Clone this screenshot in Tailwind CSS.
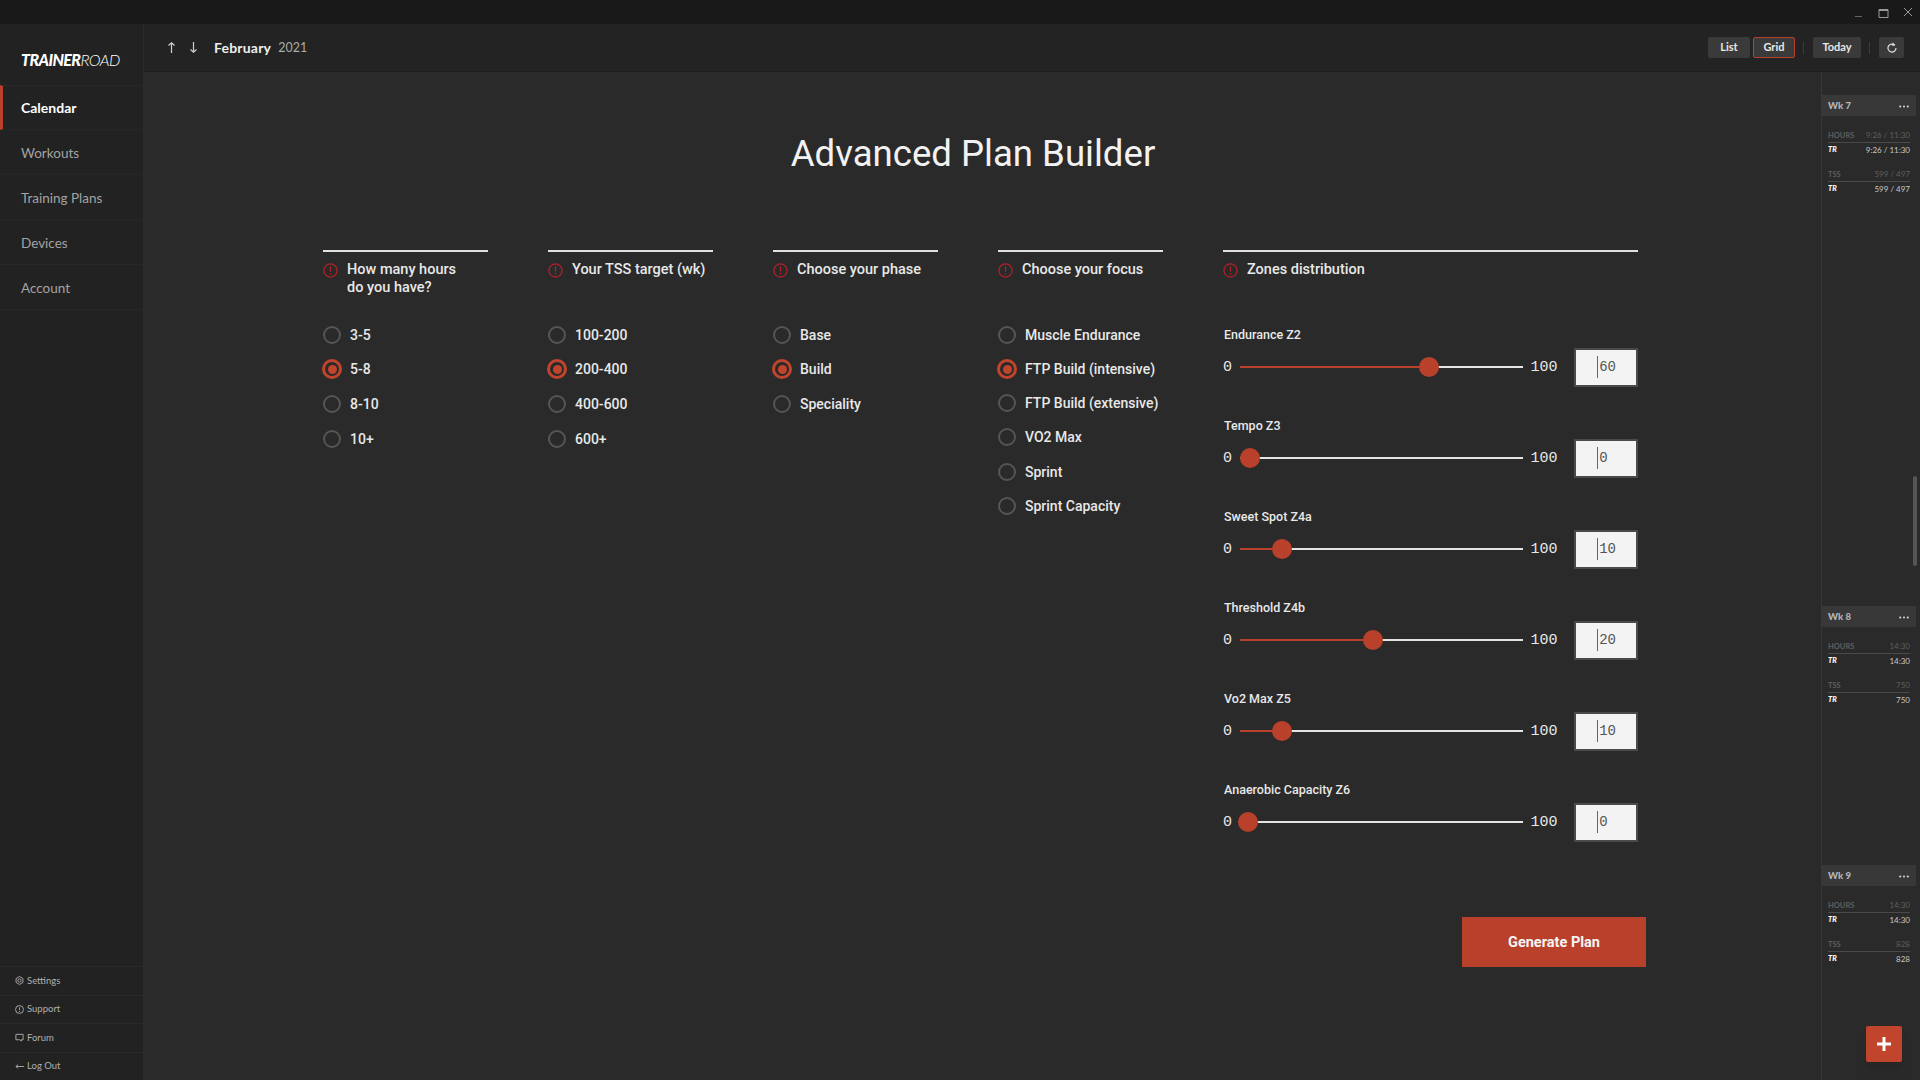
<!DOCTYPE html>
<html>
<head>
<meta charset="utf-8">
<script src="https://cdn.jsdelivr.net/npm/@tailwindcss/browser@4"></script>
</head>
<body class="m-0 h-[1080px] w-[1920px] overflow-hidden bg-[#2a2a2a] font-['Lato',sans-serif] text-[#e8e8e8]">
<!-- title bar -->
<div class="flex h-[24px] items-center justify-end bg-[#191919] pr-[7px]">
  <svg class="mr-[15px] mt-[2px]" width="9" height="10" viewBox="0 0 9 10"><path d="M1 8.5H8" stroke="#666" stroke-width="1"/></svg>
  <svg class="mr-[14px] mt-[1px]" width="11" height="10" viewBox="0 0 11 10"><path d="M1 1.5H10V9.5H1Z" fill="none" stroke="#999" stroke-width="1"/><path d="M1 2H10" stroke="#999" stroke-width="2"/></svg>
  <svg width="10" height="10" viewBox="0 0 10 10"><path d="M1 1L9 9M9 1L1 9" stroke="#999" stroke-width="1"/></svg>
</div>
<div class="flex h-[1056px]">
  <!-- sidebar -->
  <aside class="flex w-[144px] shrink-0 flex-col border-r border-[#2a2a2a] bg-[#222222]">
    <div class="flex h-[61px] items-end pb-[16px] pl-[21px] text-[16px] italic leading-[18px] tracking-[-0.6px] text-white"><b class="font-black">TRAINER</b><span class="font-light">ROAD</span></div>
    <nav class="text-[13.5px] text-[#a3a3a3]">
      <div class="flex h-[45px] items-center border-y border-[#272727] border-l-[3px] border-l-[#b9402a] pl-[18px] text-[14px] font-bold text-white">Calendar</div>
      <div class="flex h-[45px] items-center border-b border-[#272727] pl-[21px] pt-[2px]">Workouts</div>
      <div class="flex h-[45px] items-center border-b border-[#272727] pl-[21px] pt-[2px]">Training Plans</div>
      <div class="flex h-[45px] items-center border-b border-[#272727] pl-[21px] pt-[2px]">Devices</div>
      <div class="flex h-[45px] items-center border-b border-[#272727] pl-[21px] pt-[2px]">Account</div>
    </nav>
    <div class="mt-auto text-[9.5px] text-[#b0b0b0]">
      <div class="flex h-[28.5px] items-center gap-[3px] border-t border-[#2a2a2a] pl-[15px]"><svg width="9" height="9" viewBox="0 0 10 10" fill="none" stroke="#b0b0b0"><path d="M5 .6 8.8 2.8V7.2L5 9.4 1.2 7.2V2.8Z"/><circle cx="5" cy="5" r="1.8"/></svg>Settings</div>
      <div class="flex h-[28.5px] items-center gap-[3px] border-t border-[#2a2a2a] pl-[15px]"><svg width="9" height="9" viewBox="0 0 10 10" fill="none" stroke="#b0b0b0"><circle cx="5" cy="5" r="4.4"/><path d="M5 2.5V5.5M5 6.6V7.8"/></svg>Support</div>
      <div class="flex h-[28.5px] items-center gap-[3px] border-t border-[#2a2a2a] pl-[15px]"><svg width="9" height="9" viewBox="0 0 10 10" fill="none" stroke="#b0b0b0"><path d="M1 1.5H9V7.5H7V9L5.5 7.5H1Z"/></svg>Forum</div>
      <div class="flex h-[28.5px] items-center gap-[3px] border-t border-[#2a2a2a] pl-[15px]"><svg width="9" height="9" viewBox="0 0 10 10" fill="none" stroke="#b0b0b0"><path d="M10 5H1M3.5 2.8 1 5l2.5 2.2"/></svg>Log Out</div>
    </div>
  </aside>
  <div class="flex min-w-0 flex-1 flex-col">
    <!-- top header -->
    <header class="flex h-[48px] shrink-0 items-center border-b border-[#1e1e1e] bg-[#232323] pl-[23px] pr-[16px]">
      <svg class="mr-[13px]" width="9" height="11" viewBox="0 0 9 11" fill="none" stroke="#cfcfcf" stroke-width="1.2"><path d="M4.5 11V1M1.5 3.5 4.5 .8 7.5 3.5"/></svg>
      <svg class="mr-[16px]" width="9" height="11" viewBox="0 0 9 11" fill="none" stroke="#cfcfcf" stroke-width="1.2"><path d="M4.5 0V10M1.5 7.5 4.5 10.2 7.5 7.5"/></svg>
      <span class="text-[14px] font-bold tracking-[0.2px] text-[#eeeeee]">February</span>
      <span class="ml-[7px] pt-px text-[12.5px] text-[#aaaaaa]">2021</span>
      <div class="ml-auto flex items-center text-[11px] font-bold text-[#e8e8e8]">
        <div class="flex h-[21px] w-[42px] items-center justify-center rounded-[2px] bg-[#3a3a3a]">List</div>
        <div class="ml-[3px] flex h-[21px] w-[42px] items-center justify-center rounded-[2px] border border-[#b9402a] bg-[#3a3a3a]">Grid</div>
        <div class="ml-[8px] mr-[9px] h-[12px] w-px bg-[#3a3a3a]"></div>
        <div class="flex h-[21px] w-[48px] items-center justify-center rounded-[2px] bg-[#3a3a3a]">Today</div>
        <div class="ml-[8px] mr-[9px] h-[12px] w-px bg-[#3a3a3a]"></div>
        <div class="flex h-[21px] w-[25px] items-center justify-center rounded-[2px] bg-[#3a3a3a]"><svg width="10" height="11" viewBox="0 0 10 11" fill="none" stroke="#dddddd" stroke-width="1.2"><path d="M7.8 3.2A4 4 0 1 0 9 6"/><path d="M5.8 .6 8.2 3.2 5.2 4" fill="#dddddd" stroke="none"/></svg></div>
      </div>
    </header>
    <div class="flex min-h-0 flex-1">
      <!-- main -->
      <main class="w-[1677px] shrink-0 pl-[179px] font-['Roboto',sans-serif]">
        <h1 class="mt-[59px] mr-[198px] text-center text-[36.6px] font-normal leading-[46px] text-[#f2f2f2]">Advanced Plan Builder</h1>
        <div class="mt-[73px] flex gap-[60px]">
          <!-- col 1 -->
          <section class="w-[165px] text-[14px] font-medium">
            <div class="flex h-[68px] gap-[9px] border-t-2 border-[#e0e0e0] pt-[9px] text-[14.5px] leading-[18px]">
              <svg class="mt-[2px] shrink-0" width="15" height="15" viewBox="0 0 15 15" fill="none" stroke="#b8202a" stroke-width="1.2"><circle cx="7.5" cy="7.5" r="6.6"/><path d="M7.5 3.5V8.6M7.5 10V11.4"/></svg>
              <span>How many hours<br>do you have?</span>
            </div>
            <div class="flex h-[34px] items-center gap-[9px] pt-[1px]"><span class="-mt-[1px] size-[18px] rounded-full border-2 border-[#555555]"></span>3-5</div>
            <div class="flex h-[34px] items-center gap-[9px] pt-[1px]"><span class="-mx-px -mt-[1px] flex size-[20px] items-center justify-center rounded-full border-[3.5px] border-[#c0452c]"><span class="size-[9px] rounded-full bg-[#c0452c]"></span></span>5-8</div>
            <div class="flex h-[36px] items-center gap-[9px] pt-[1px]"><span class="-mt-[1px] size-[18px] rounded-full border-2 border-[#555555]"></span>8-10</div>
            <div class="flex h-[34px] items-center gap-[9px] pt-[1px]"><span class="-mt-[1px] size-[18px] rounded-full border-2 border-[#555555]"></span>10+</div>
          </section>
          <!-- col 2 -->
          <section class="w-[165px] text-[14px] font-medium">
            <div class="flex h-[68px] gap-[9px] border-t-2 border-[#e0e0e0] pt-[9px] text-[14.5px] leading-[18px]">
              <svg class="mt-[2px] shrink-0" width="15" height="15" viewBox="0 0 15 15" fill="none" stroke="#b8202a" stroke-width="1.2"><circle cx="7.5" cy="7.5" r="6.6"/><path d="M7.5 3.5V8.6M7.5 10V11.4"/></svg>
              <span>Your TSS target (wk)</span>
            </div>
            <div class="flex h-[34px] items-center gap-[9px] pt-[1px]"><span class="-mt-[1px] size-[18px] rounded-full border-2 border-[#555555]"></span>100-200</div>
            <div class="flex h-[34px] items-center gap-[9px] pt-[1px]"><span class="-mx-px -mt-[1px] flex size-[20px] items-center justify-center rounded-full border-[3.5px] border-[#c0452c]"><span class="size-[9px] rounded-full bg-[#c0452c]"></span></span>200-400</div>
            <div class="flex h-[36px] items-center gap-[9px] pt-[1px]"><span class="-mt-[1px] size-[18px] rounded-full border-2 border-[#555555]"></span>400-600</div>
            <div class="flex h-[34px] items-center gap-[9px] pt-[1px]"><span class="-mt-[1px] size-[18px] rounded-full border-2 border-[#555555]"></span>600+</div>
          </section>
          <!-- col 3 -->
          <section class="w-[165px] text-[14px] font-medium">
            <div class="flex h-[68px] gap-[9px] border-t-2 border-[#e0e0e0] pt-[9px] text-[14.5px] leading-[18px]">
              <svg class="mt-[2px] shrink-0" width="15" height="15" viewBox="0 0 15 15" fill="none" stroke="#b8202a" stroke-width="1.2"><circle cx="7.5" cy="7.5" r="6.6"/><path d="M7.5 3.5V8.6M7.5 10V11.4"/></svg>
              <span>Choose your phase</span>
            </div>
            <div class="flex h-[34px] items-center gap-[9px] pt-[1px]"><span class="-mt-[1px] size-[18px] rounded-full border-2 border-[#555555]"></span>Base</div>
            <div class="flex h-[34px] items-center gap-[9px] pt-[1px]"><span class="-mx-px -mt-[1px] flex size-[20px] items-center justify-center rounded-full border-[3.5px] border-[#c0452c]"><span class="size-[9px] rounded-full bg-[#c0452c]"></span></span>Build</div>
            <div class="flex h-[36px] items-center gap-[9px] pt-[1px]"><span class="-mt-[1px] size-[18px] rounded-full border-2 border-[#555555]"></span>Speciality</div>
          </section>
          <!-- col 4 -->
          <section class="w-[165px] whitespace-nowrap text-[14px] font-medium">
            <div class="flex h-[68px] gap-[9px] border-t-2 border-[#e0e0e0] pt-[9px] text-[14.5px] leading-[18px]">
              <svg class="mt-[2px] shrink-0" width="15" height="15" viewBox="0 0 15 15" fill="none" stroke="#b8202a" stroke-width="1.2"><circle cx="7.5" cy="7.5" r="6.6"/><path d="M7.5 3.5V8.6M7.5 10V11.4"/></svg>
              <span>Choose your focus</span>
            </div>
            <div class="flex h-[34px] items-center gap-[9px] pt-[1px]"><span class="-mt-[1px] size-[18px] rounded-full border-2 border-[#555555]"></span>Muscle Endurance</div>
            <div class="flex h-[34px] items-center gap-[9px] pt-[1px]"><span class="-mx-px -mt-[1px] flex size-[20px] items-center justify-center rounded-full border-[3.5px] border-[#c0452c]"><span class="size-[9px] rounded-full bg-[#c0452c]"></span></span>FTP Build (intensive)</div>
            <div class="flex h-[33px] items-center gap-[9px] pt-[1px]"><span class="-mt-[1px] size-[18px] rounded-full border-2 border-[#555555]"></span>FTP Build (extensive)</div>
            <div class="flex h-[36px] items-center gap-[9px] pt-[1px]"><span class="-mt-[1px] size-[18px] rounded-full border-2 border-[#555555]"></span>VO2 Max</div>
            <div class="flex h-[34px] items-center gap-[9px] pt-[1px]"><span class="-mt-[1px] size-[18px] rounded-full border-2 border-[#555555]"></span>Sprint</div>
            <div class="flex h-[33px] items-center gap-[9px] pt-[1px]"><span class="-mt-[1px] size-[18px] rounded-full border-2 border-[#555555]"></span>Sprint Capacity</div>
          </section>
          <!-- col 5 -->
          <section class="w-[415px]">
            <div class="flex h-[71px] gap-[9px] border-t-2 border-[#e0e0e0] pt-[9px] text-[14.5px] font-medium leading-[18px]">
              <svg class="mt-[2px] shrink-0" width="15" height="15" viewBox="0 0 15 15" fill="none" stroke="#b8202a" stroke-width="1.2"><circle cx="7.5" cy="7.5" r="6.6"/><path d="M7.5 3.5V8.6M7.5 10V11.4"/></svg>
              <span>Zones distribution</span>
            </div>
            <div class="mb-[25px]">
              <div class="flex h-[26px] items-center pl-px pt-[2px] text-[12.5px] font-medium">Endurance Z2</div>
              <div class="flex h-[40px] items-center font-['Liberation_Mono',monospace] text-[15px]"><span class="mt-[2px] w-[17px]">0</span><div class="relative h-[2.5px] w-[285px] bg-[#e4e4e4]"><div class="h-full w-[189px] bg-[#b9402a]"></div><span class="absolute left-[179px] top-[-9px] size-[20px] rounded-full bg-[#b9402a]"></span></div><span class="ml-[7px] mt-[2px] w-[44px]">100</span><div class="flex h-[39px] w-[64px] items-center border-2 border-[#4a4a4a] bg-[#f3f3f3] pl-[21px] text-[14px] text-[#555555]"><span class="mr-px h-[22px] w-px bg-[#666666]"></span>60</div></div>
            </div>
            <div class="mb-[25px]">
              <div class="flex h-[26px] items-center pl-px pt-[2px] text-[12.5px] font-medium">Tempo Z3</div>
              <div class="flex h-[40px] items-center font-['Liberation_Mono',monospace] text-[15px]"><span class="mt-[2px] w-[17px]">0</span><div class="relative h-[2.5px] w-[285px] bg-[#e4e4e4]"><span class="absolute left-0 top-[-9px] size-[20px] rounded-full bg-[#b9402a]"></span></div><span class="ml-[7px] mt-[2px] w-[44px]">100</span><div class="flex h-[39px] w-[64px] items-center border-2 border-[#4a4a4a] bg-[#f3f3f3] pl-[21px] text-[14px] text-[#555555]"><span class="mr-px h-[22px] w-px bg-[#666666]"></span>0</div></div>
            </div>
            <div class="mb-[25px]">
              <div class="flex h-[26px] items-center pl-px pt-[2px] text-[12.5px] font-medium">Sweet Spot Z4a</div>
              <div class="flex h-[40px] items-center font-['Liberation_Mono',monospace] text-[15px]"><span class="mt-[2px] w-[17px]">0</span><div class="relative h-[2.5px] w-[285px] bg-[#e4e4e4]"><div class="h-full w-[42px] bg-[#b9402a]"></div><span class="absolute left-[32px] top-[-9px] size-[20px] rounded-full bg-[#b9402a]"></span></div><span class="ml-[7px] mt-[2px] w-[44px]">100</span><div class="flex h-[39px] w-[64px] items-center border-2 border-[#4a4a4a] bg-[#f3f3f3] pl-[21px] text-[14px] text-[#555555]"><span class="mr-px h-[22px] w-px bg-[#666666]"></span>10</div></div>
            </div>
            <div class="mb-[25px]">
              <div class="flex h-[26px] items-center pl-px pt-[2px] text-[12.5px] font-medium">Threshold Z4b</div>
              <div class="flex h-[40px] items-center font-['Liberation_Mono',monospace] text-[15px]"><span class="mt-[2px] w-[17px]">0</span><div class="relative h-[2.5px] w-[285px] bg-[#e4e4e4]"><div class="h-full w-[133px] bg-[#b9402a]"></div><span class="absolute left-[123px] top-[-9px] size-[20px] rounded-full bg-[#b9402a]"></span></div><span class="ml-[7px] mt-[2px] w-[44px]">100</span><div class="flex h-[39px] w-[64px] items-center border-2 border-[#4a4a4a] bg-[#f3f3f3] pl-[21px] text-[14px] text-[#555555]"><span class="mr-px h-[22px] w-px bg-[#666666]"></span>20</div></div>
            </div>
            <div class="mb-[25px]">
              <div class="flex h-[26px] items-center pl-px pt-[2px] text-[12.5px] font-medium">Vo2 Max Z5</div>
              <div class="flex h-[40px] items-center font-['Liberation_Mono',monospace] text-[15px]"><span class="mt-[2px] w-[17px]">0</span><div class="relative h-[2.5px] w-[285px] bg-[#e4e4e4]"><div class="h-full w-[42px] bg-[#b9402a]"></div><span class="absolute left-[32px] top-[-9px] size-[20px] rounded-full bg-[#b9402a]"></span></div><span class="ml-[7px] mt-[2px] w-[44px]">100</span><div class="flex h-[39px] w-[64px] items-center border-2 border-[#4a4a4a] bg-[#f3f3f3] pl-[21px] text-[14px] text-[#555555]"><span class="mr-px h-[22px] w-px bg-[#666666]"></span>10</div></div>
            </div>
            <div>
              <div class="flex h-[26px] items-center pl-px pt-[2px] text-[12.5px] font-medium">Anaerobic Capacity Z6</div>
              <div class="flex h-[40px] items-center font-['Liberation_Mono',monospace] text-[15px]"><span class="mt-[2px] w-[17px]">0</span><div class="relative h-[2.5px] w-[285px] bg-[#e4e4e4]"><span class="absolute left-[-2px] top-[-9px] size-[20px] rounded-full bg-[#b9402a]"></span></div><span class="ml-[7px] mt-[2px] w-[44px]">100</span><div class="flex h-[39px] w-[64px] items-center border-2 border-[#4a4a4a] bg-[#f3f3f3] pl-[21px] text-[14px] text-[#555555]"><span class="mr-px h-[22px] w-px bg-[#666666]"></span>0</div></div>
            </div>
            <div class="mt-[75px] flex justify-end">
              <div class="-mr-[8px] flex h-[50px] w-[184px] items-center justify-center bg-[#b9402a] pt-[2px] text-[14.5px] font-bold text-[#f5f5f5]">Generate Plan</div>
            </div>
          </section>
        </div>
      </main>
      <!-- week column -->
      <aside class="relative flex-1 border-l border-[#383838] pt-[23px] text-[8px] text-[#c8c8c8]">
        <div class="h-[511px]">
          <div class="flex h-[21px] w-[94px] items-center justify-between bg-[#383838] pl-[6px] pr-[7px] pt-px text-[9.5px] font-black text-[#b5b5b5]">Wk 7<svg width="10" height="3" viewBox="0 0 10 3" fill="#e0e0e0"><circle cx="1.2" cy="1.5" r="1"/><circle cx="5" cy="1.5" r="1"/><circle cx="8.8" cy="1.5" r="1"/></svg></div>
          <div class="mt-[15px] w-[88px] pl-[6px]">
            <div class="flex h-[12px] items-end justify-between border-b border-[#4a4a4a] pb-[1px] text-[#5f5f5f]"><b class="text-[7.5px]">HOURS</b><span>9:26 / 11:30</span></div>
            <div class="flex h-[14px] items-center justify-between"><b class="text-[7.5px] italic font-black text-white">TR</b><span>9:26 / 11:30</span></div>
            <div class="mt-[13px] flex h-[12px] items-end justify-between border-b border-[#4a4a4a] pb-[1px] text-[#5f5f5f]"><b class="text-[7.5px]">TSS</b><span>599 / 497</span></div>
            <div class="flex h-[14px] items-center justify-between"><b class="text-[7.5px] italic font-black text-white">TR</b><span>599 / 497</span></div>
          </div>
        </div>
        <div class="h-[259px]">
          <div class="flex h-[21px] w-[94px] items-center justify-between bg-[#383838] pl-[6px] pr-[7px] pt-px text-[9.5px] font-black text-[#b5b5b5]">Wk 8<svg width="10" height="3" viewBox="0 0 10 3" fill="#e0e0e0"><circle cx="1.2" cy="1.5" r="1"/><circle cx="5" cy="1.5" r="1"/><circle cx="8.8" cy="1.5" r="1"/></svg></div>
          <div class="mt-[15px] w-[88px] pl-[6px]">
            <div class="flex h-[12px] items-end justify-between border-b border-[#4a4a4a] pb-[1px] text-[#5f5f5f]"><b class="text-[7.5px]">HOURS</b><span>14:30</span></div>
            <div class="flex h-[14px] items-center justify-between"><b class="text-[7.5px] italic font-black text-white">TR</b><span>14:30</span></div>
            <div class="mt-[13px] flex h-[12px] items-end justify-between border-b border-[#4a4a4a] pb-[1px] text-[#5f5f5f]"><b class="text-[7.5px]">TSS</b><span>750</span></div>
            <div class="flex h-[14px] items-center justify-between"><b class="text-[7.5px] italic font-black text-white">TR</b><span>750</span></div>
          </div>
        </div>
        <div>
          <div class="flex h-[21px] w-[94px] items-center justify-between bg-[#383838] pl-[6px] pr-[7px] pt-px text-[9.5px] font-black text-[#b5b5b5]">Wk 9<svg width="10" height="3" viewBox="0 0 10 3" fill="#e0e0e0"><circle cx="1.2" cy="1.5" r="1"/><circle cx="5" cy="1.5" r="1"/><circle cx="8.8" cy="1.5" r="1"/></svg></div>
          <div class="mt-[15px] w-[88px] pl-[6px]">
            <div class="flex h-[12px] items-end justify-between border-b border-[#4a4a4a] pb-[1px] text-[#5f5f5f]"><b class="text-[7.5px]">HOURS</b><span>14:30</span></div>
            <div class="flex h-[14px] items-center justify-between"><b class="text-[7.5px] italic font-black text-white">TR</b><span>14:30</span></div>
            <div class="mt-[13px] flex h-[12px] items-end justify-between border-b border-[#4a4a4a] pb-[1px] text-[#5f5f5f]"><b class="text-[7.5px]">TSS</b><span>828</span></div>
            <div class="flex h-[14px] items-center justify-between"><b class="text-[7.5px] italic font-black text-white">TR</b><span>828</span></div>
          </div>
        </div>
        <div class="absolute right-[3px] top-[404px] h-[90px] w-[4px] rounded-full bg-[#555555]"></div>
        <div class="absolute left-[44px] top-[954px] flex size-[36px] items-center justify-center rounded-[2px] bg-[#c0452c] shadow-lg"><svg width="14" height="14" viewBox="0 0 14 14"><path d="M7 0V14M0 7H14" stroke="#ffffff" stroke-width="3"/></svg></div>
      </aside>
    </div>
  </div>
</div>
</body>
</html>
